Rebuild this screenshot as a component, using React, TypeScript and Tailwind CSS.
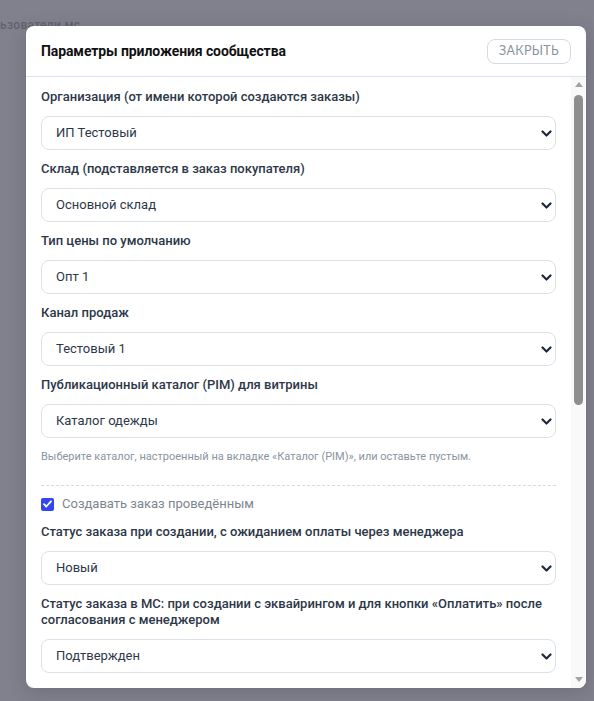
import React from "react";

const font = { fontFamily: "Roboto, 'Noto Sans', Arial, sans-serif" };

function Chevron() {
  return (
    <svg width="11" height="7" viewBox="0 0 11 7" fill="none">
      <path d="M1.5 1.5l4 4 4-4" stroke="#1e293b" strokeWidth="2.2" strokeLinecap="round" strokeLinejoin="round" />
    </svg>
  );
}

function Field({ label, value, className = "" }: { label: React.ReactNode; value: string; className?: string }) {
  return (
    <div className={"flex flex-col " + className}>
      <div className="text-[13px] leading-[16px] font-medium text-[#2d3748] mb-[11px]">{label}</div>
      <div className="h-[34px] rounded-[8px] border border-[#dbe1ea] bg-white flex items-center justify-between pl-[14px] pr-[3px]">
        <span className="text-[13px] text-[#2d3748]">{value}</span>
        <Chevron />
      </div>
    </div>
  );
}

export default function App() {
  return (
    <div className="relative w-[594px] h-[701px] bg-[#80818d] overflow-hidden" style={font}>
      <div className="absolute left-0 top-[16px] text-[12px] text-[#62636f] font-medium tracking-wide">ьзователи мс</div>
      <div className="absolute left-[26px] top-[26px] w-[560px] h-[662px] bg-white rounded-[8px] flex flex-col overflow-hidden shadow-[0_4px_20px_rgba(0,0,0,0.15)]">
        <div className="h-[51px] shrink-0 flex items-center justify-between pl-[15px] pr-[15px] border-b border-[#dbe3ef]">
          <div className="text-[14px] font-bold text-[#111111] tracking-[-0.1px]">Параметры приложения сообщества</div>
          <div className="h-[25px] w-[84px] rounded-[8px] border border-[#d3dae3] flex items-center justify-center text-[12.5px] text-[#8a939e] tracking-[0.3px]" style={{ fontFamily: "Lato, 'Open Sans', sans-serif" }}>
            ЗАКРЫТЬ
          </div>
        </div>
        <div className="flex flex-1 min-h-0">
          <div className="flex-1 overflow-hidden pl-[15px] pr-[15px] pt-[12px] flex flex-col">
            <div className="flex flex-col gap-[11px]">
              <Field label="Организация (от имени которой создаются заказы)" value="ИП Тестовый" />
              <Field label="Склад (подставляется в заказ покупателя)" value="Основной склад" />
              <Field label="Тип цены по умолчанию" value="Опт 1" />
              <Field label="Канал продаж" value="Тестовый 1" />
              <Field label="Публикационный каталог (PIM) для витрины" value="Каталог одежды" />
            </div>
            <div className="mt-[12px] text-[11px] leading-[14px] text-[#8a94a0]">
              Выберите каталог, настроенный на вкладке «Каталог (PIM)», или оставьте пустым.
            </div>
            <div className="mt-[21px] border-t border-dashed border-[#d5dae1]" />
            <div className="mt-[10px] h-[16px] flex items-center gap-[8px]">
              <div className="w-[13px] h-[13px] rounded-[2px] bg-[#3346f0] flex items-center justify-center">
                <svg width="9" height="8" viewBox="0 0 9 8" fill="none">
                  <path d="M1 4.2l2.3 2.3L8 1.3" stroke="white" strokeWidth="1.8" strokeLinecap="round" strokeLinejoin="round" />
                </svg>
              </div>
              <span className="text-[13px] text-[#7b8591]">Создавать заказ проведённым</span>
            </div>
            <div className="mt-[12px] flex flex-col gap-[11px]">
              <Field label="Статус заказа при создании, с ожиданием оплаты через менеджера" value="Новый" />
              <Field
                label={<>Статус заказа в МС: при создании с эквайрингом и для кнопки «Оплатить» после<br />согласования с менеджером</>}
                value="Подтвержден"
              />
              <Field className="mt-[2px]" label="Статус заказа в МС после успешной оплаты" value="Оплачен" />
            </div>
          </div>
          <div className="w-[15px] shrink-0 bg-[#f9f9f9] flex flex-col items-center">
            <div className="h-[15px] flex items-center justify-center">
              <svg width="8" height="5" viewBox="0 0 8 5"><path d="M0 5L4 0L8 5Z" fill="#a3a3a3" /></svg>
            </div>
            <div className="mt-[3px] w-[9px] h-[310px] rounded-full bg-[#8e8e8e]" />
            <div className="flex-1" />
            <div className="h-[17px] flex items-center justify-center">
              <svg width="8" height="5" viewBox="0 0 8 5"><path d="M0 0L8 0L4 5Z" fill="#a3a3a3" /></svg>
            </div>
          </div>
        </div>
      </div>
    </div>
  );
}
